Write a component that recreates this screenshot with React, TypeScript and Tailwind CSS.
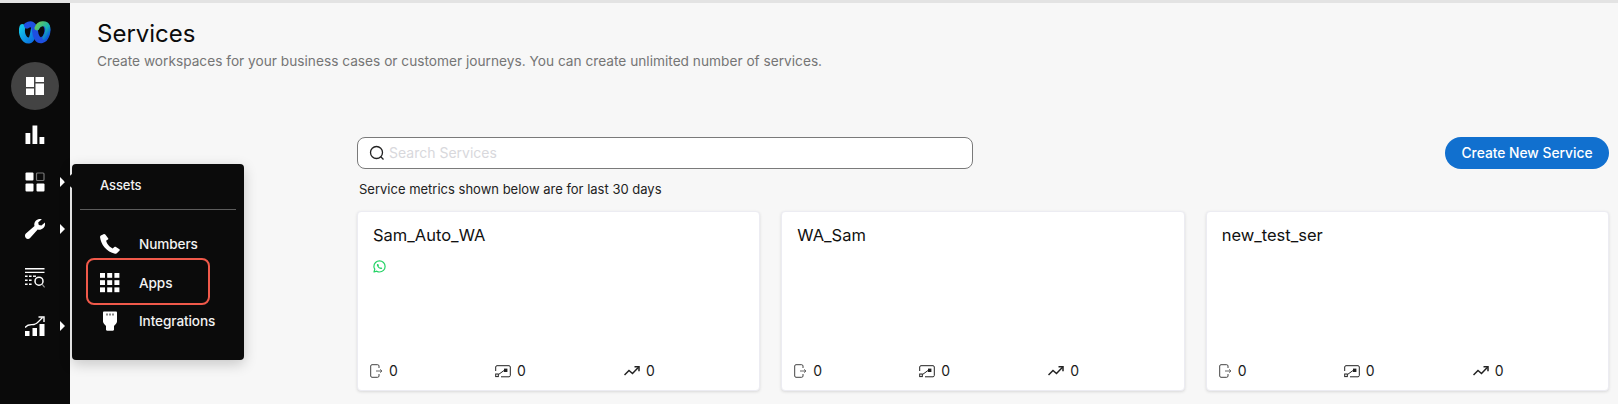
import React from "react";

const Arrow = () => (
  <span className="absolute left-[60px] top-1/2 -translate-y-1/2 w-0 h-0 border-y-[5px] border-y-transparent border-l-[5px] border-l-white" />
);

const Logo = () => (
  <svg width="32" height="24" viewBox="0 0 32 24" fill="none">
    <defs>
      <linearGradient id="lg1" x1="0" y1="0" x2="1" y2="1">
        <stop offset="0" stopColor="#13c4e8" />
        <stop offset="1" stopColor="#0a6ee0" />
      </linearGradient>
      <linearGradient id="lg2" x1="0" y1="0" x2="1" y2="1">
        <stop offset="0" stopColor="#66c85a" />
        <stop offset="0.6" stopColor="#16b5b0" />
        <stop offset="1" stopColor="#0a55e0" />
      </linearGradient>
    </defs>
    <path d="M3.5 7 C1.5 13 5 21 10 20.5 C14 20 14 12 15 9" stroke="url(#lg1)" strokeWidth="6" strokeLinecap="round" />
    <path d="M8 5.5 C12 2.5 15.5 5 16 11 C16.5 17 19 21 23 20 C27 19 30 11 27.5 6" stroke="#1f4fe0" strokeWidth="6" strokeLinecap="round" />
    <path d="M18 8 C20 2.5 27 2.5 28.5 6.5 C29.5 10 28 15 26 18" stroke="url(#lg2)" strokeWidth="5" strokeLinecap="round" />
  </svg>
);

const Dash = () => (
  <svg width="20" height="20" viewBox="0 0 20 20" fill="#fff">
    <rect x="1" y="1" width="8" height="10" />
    <rect x="1" y="12.5" width="8" height="6.5" />
    <rect x="10.5" y="1" width="8.5" height="5" />
    <rect x="10.5" y="7.5" width="8.5" height="11.5" />
  </svg>
);

const Bars = () => (
  <svg width="20" height="20" viewBox="0 0 20 20" fill="#fff">
    <rect x="0.5" y="8" width="4.8" height="11" />
    <rect x="7.5" y="0.5" width="4.8" height="18.5" />
    <rect x="14.5" y="12" width="4.8" height="7" />
  </svg>
);

const Assets = () => (
  <svg width="20" height="20" viewBox="0 0 20 20" fill="#fff">
    <rect x="0.5" y="0.5" width="8" height="8" rx="1" />
    <rect x="11.5" y="1" width="7.5" height="7.5" rx="1" fill="none" stroke="#777" strokeWidth="1.2" />
    <rect x="0.5" y="11.5" width="8" height="8" rx="1" />
    <rect x="11.5" y="11.5" width="8" height="8" rx="1" />
  </svg>
);

const Wrench = () => (
  <svg width="20" height="20" viewBox="0 0 20 20" fill="#fff">
    <path d="M20 3.4 L16.4 6.6 L13.8 6 L13.2 3.4 L16.8 0.2 C13.6 -0.6 9.6 1.4 9.3 5 C9.2 5.8 9.3 6.5 9.5 7.1 L0.9 14.6 C-0.4 15.8 -0.3 17.8 0.8 19 C1.9 20.2 3.9 20.3 5.1 19 L12.7 10.5 C13.5 10.8 14.4 10.8 15.2 10.7 C18.6 10.2 20.7 6.8 20 3.4 Z" />
  </svg>
);

const ListSearch = () => (
  <svg width="20" height="20" viewBox="0 0 20 20" fill="none" stroke="#fff">
    <path d="M0 0.8h19.5M0 4.4h19.5" strokeWidth="1.4" />
    <path d="M0 8.2h2.6M4 8.2h2.6M0 12.2h2.6M4 12.2h2.6M0 16.2h2.6M4 16.2h2.6" strokeWidth="1.5" />
    <path d="M8 8.2h3" strokeWidth="1.4" />
    <circle cx="14" cy="13.2" r="4" strokeWidth="1.5" />
    <path d="M17 16.2 L19.6 19.4" strokeWidth="1.1" stroke="#999" />
  </svg>
);

const Growth = () => (
  <svg width="20" height="20" viewBox="0 0 20 20" fill="#fff">
    <rect x="0" y="15" width="4.5" height="5" />
    <rect x="7.5" y="12" width="4.5" height="8" />
    <rect x="14.5" y="8" width="5" height="12" />
    <path d="M0 11.5 C3 7.5 6 9 9 8.5 C12 8 14 5 17.5 1.5" stroke="#fff" strokeWidth="1.4" fill="none" />
    <path d="M13.5 1 H19 V6" stroke="#fff" strokeWidth="1.4" fill="none" />
  </svg>
);

const Phone = () => (
  <svg width="20" height="20" viewBox="0 0 20 20" fill="#fff">
    <path d="M3.5 0.2 L0.9 1.6 C0.2 2 0 2.6 0.1 3.4 C0.6 6.6 2 10.2 4.4 13.2 C7.2 16.6 11 18.9 15 19.7 C15.9 19.9 16.6 19.7 17.1 19.1 L19.6 16.4 C19.9 16 19.8 15.5 19.4 15.2 L15.6 12.8 C15.2 12.6 14.8 12.6 14.4 12.9 L12.6 14.4 C10.6 13.7 8.4 11.8 7.2 9.6 C6.7 8.6 6.3 7.6 6.1 6.8 L7.9 5.6 C8.3 5.3 8.5 4.9 8.3 4.4 L5.3 0.6 C4.9 0 4.1 -0.1 3.5 0.2 Z" />
  </svg>
);

const Grid = () => (
  <svg width="20" height="20" viewBox="0 0 20 20" fill="#fff">
    {[0, 7.2, 14.4].map((y) =>
      [0, 7.2, 14.4].map((x) => <rect key={`${x}-${y}`} x={x} y={y} width="5" height="4.8" />)
    )}
  </svg>
);

const Plug = () => (
  <svg width="14" height="20" viewBox="0 0 14 20" fill="#fff">
    <path d="M1 0.5 H13 C13.5 0.5 14 1 14 1.5 V10.5 C14 12 12 14 11 15 V18.5 C11 19.2 10.5 19.7 10 19.7 H4 C3.5 19.7 3 19.2 3 18.5 V15 C2 14 0 12 0 10.5 V1.5 C0 1 0.5 0.5 1 0.5 Z" />
    <path d="M4 2.5 V4.5 M7 2.5 V4.5 M10 2.5 V4.5" stroke="#0b0b0b" strokeWidth="1" />
  </svg>
);

const Whatsapp = () => (
  <svg width="13" height="13" viewBox="0 0 13 13" fill="none" stroke="#25d366">
    <path d="M1 12 L1.8 9.2 C1.2 8.3 0.9 7.4 0.9 6.4 C0.9 3.3 3.4 0.9 6.5 0.9 C9.6 0.9 12.1 3.3 12.1 6.4 C12.1 9.5 9.6 12 6.5 12 C5.5 12 4.6 11.7 3.8 11.2 Z" strokeWidth="1.2" strokeLinejoin="round" />
    <path d="M4.2 3.9 C3.7 4.5 3.7 5.4 4.4 6.6 C5.2 7.9 6.6 9 8 9.1 C8.7 9.1 9.2 8.6 9.2 8 L7.9 7.2 L7.3 7.8 C6.6 7.5 5.8 6.7 5.5 6 L6 5.4 L5.2 3.9 Z" fill="#25d366" stroke="none" />
  </svg>
);

const Entry = () => (
  <svg width="13" height="14" viewBox="0 0 13 14" fill="none" stroke="#444">
    <path d="M9 4 V2 C9 1.2 8.5 0.7 7.7 0.7 H2 C1.2 0.7 0.7 1.2 0.7 2 V12 C0.7 12.8 1.2 13.3 2 13.3 H7.7 C8.5 13.3 9 12.8 9 12 V10" strokeWidth="1" />
    <path d="M6 7 H12 M10 5.4 L12 7 L10 8.6" strokeWidth="1" stroke="#666" />
  </svg>
);

const Flow = () => (
  <svg width="16" height="13" viewBox="0 0 16 13" fill="none" stroke="#222">
    <path d="M0.7 6 V2 C0.7 1.2 1.2 0.7 2 0.7 H14 C14.8 0.7 15.3 1.2 15.3 2 V10.5 C15.3 11.3 14.8 11.8 14 11.8 H6" strokeWidth="1" />
    <rect x="0.7" y="9" width="2.6" height="2.6" strokeWidth="1" />
    <path d="M3.5 9.5 L9 5.5" strokeWidth="1" />
    <rect x="9" y="3.6" width="3.4" height="3.4" fill="#222" stroke="none" />
  </svg>
);

const Trend = () => (
  <svg width="16" height="10" viewBox="0 0 16 10" fill="none" stroke="#222">
    <path d="M0.5 9 L5 4.5 L8.5 7.5 L14.5 1.2" strokeWidth="1.5" />
    <path d="M10.5 0.8 H15 V5.2" strokeWidth="1.5" />
  </svg>
);

const Metric = ({ icon, w }: { icon: React.ReactNode; w: string }) => (
  <div className={`flex items-center gap-[6px] ${w}`}>
    {icon}
    <span className="text-[14px] leading-5 text-[#1b1b1b]">0</span>
  </div>
);

const Card = ({ title, whatsapp }: { title: string; whatsapp?: boolean }) => (
  <div className="h-[180px] flex flex-col bg-white rounded-[4px] border border-[#ececf2] shadow-[0_1px_3px_rgba(0,0,0,0.12)] pl-[15px] pr-[15px] pt-[11px] pb-[9px]">
    <div className="text-[16.5px] leading-6 text-[#111]">{title}</div>
    <div className="h-[13px] mt-[13px]">{whatsapp && <Whatsapp />}</div>
    <div className="mt-auto -ml-[3px] flex items-center">
      <Metric icon={<Entry />} w="w-[125px]" />
      <Metric icon={<Flow />} w="w-[129px]" />
      <Metric icon={<Trend />} w="w-[60px]" />
    </div>
  </div>
);

const MenuItem = ({ icon, label }: { icon: React.ReactNode; label: string }) => (
  <div className="h-[38px] flex items-center">
    <div className="w-[20px] flex justify-center ml-[28px]">{icon}</div>
    <span className="ml-[19px] text-[13.6px] font-medium text-[#f2f2f2] tracking-[-0.1px]">{label}</span>
  </div>
);

const Rail = ({ children, arrow, mt }: { children: React.ReactNode; arrow?: boolean; mt: string }) => (
  <div className={`relative h-[20px] flex justify-center ${mt}`}>
    {children}
    {arrow && <Arrow />}
  </div>
);

export default function App() {
  return (
    <div
      className="relative w-[1618px] h-[404px] overflow-hidden flex flex-col bg-[#f7f7f7]"
      style={{ fontFamily: "Inter, 'Liberation Sans', sans-serif" }}
    >
      <div className="h-[3px] bg-[#e3e3e3] shrink-0" />
      <div className="flex flex-1 min-h-0">
        <aside className="w-[70px] shrink-0 bg-[#0a0a0a] flex flex-col">
          <div className="h-[59px] flex justify-center pt-[17px]">
            <Logo />
          </div>
          <div className="w-[48px] h-[48px] mx-auto rounded-full bg-[#434343] flex items-center justify-center">
            <Dash />
          </div>
          <Rail mt="mt-[15px]"><Bars /></Rail>
          <Rail mt="mt-[27px]" arrow><Assets /></Rail>
          <Rail mt="mt-[27px]" arrow><Wrench /></Rail>
          <Rail mt="mt-[29px]"><ListSearch /></Rail>
          <Rail mt="mt-[28px]" arrow><Growth /></Rail>
        </aside>
        <main className="flex-1 min-w-0 pl-[27px] pr-[9px]">
          <h1 className="mt-[15px] text-[24px] leading-[32px] text-[#0c0c0c]">Services</h1>
          <p className="mt-[1px] text-[13.7px] leading-5 text-[#757575]">
            Create workspaces for your business cases or customer journeys. You can create unlimited number of services.
          </p>
          <div className="ml-[260px] mt-[66px]">
            <div className="flex items-center justify-between">
              <div className="w-[616px] h-[32px] flex items-center bg-white border border-[#7a7a7a] rounded-[8px] pl-[11px]">
                <svg width="16" height="16" viewBox="0 0 16 16" fill="none" stroke="#222" strokeWidth="1.3">
                  <circle cx="7.5" cy="7.5" r="6" />
                  <path d="M11.8 11.8 L14.5 14.5" />
                </svg>
                <span className="ml-[4px] pb-[2px] text-[14px] text-[#d8d8dc]">Search Services</span>
              </div>
              <button className="w-[164px] h-[32px] rounded-full bg-[#1170cf] text-white text-[13.8px] font-medium">
                Create New Service
              </button>
            </div>
            <p className="mt-[12px] ml-[2px] text-[13px] leading-[17px] text-[#222]">
              Service metrics shown below are for last 30 days
            </p>
            <div className="mt-[13px] grid grid-cols-3 gap-[21px]">
              <Card title="Sam_Auto_WA" whatsapp />
              <Card title="WA_Sam" />
              <Card title="new_test_ser" />
            </div>
          </div>
        </main>
      </div>

      {/* flyout */}
      <div className="absolute left-[72px] top-[164px] w-[172px] h-[196px] bg-[#0b0b0b] rounded-[4px] shadow-[0_4px_14px_rgba(0,0,0,0.2)]">
        <span className="absolute -left-[8px] top-[10px] w-0 h-0 border-y-[7px] border-y-transparent border-r-[8px] border-r-[#0b0b0b]" />
        <div className="h-[45px] pl-[28px] pt-[11px] text-[13px] font-medium leading-5 text-[#f2f2f2] tracking-[-0.1px]">Assets</div>
        <div className="mx-[8px] h-px bg-[#5c5c5c]" />
        <div className="mt-[15px]">
          <MenuItem icon={<Phone />} label="Numbers" />
          <div className="mt-[1px]">
            <MenuItem icon={<Grid />} label="Apps" />
          </div>
          <MenuItem icon={<Plug />} label="Integrations" />
        </div>
        <div className="absolute left-[14px] top-[94px] w-[124px] h-[47px] rounded-[8px] border-2 border-[#f0594a]" />
      </div>
    </div>
  );
}
